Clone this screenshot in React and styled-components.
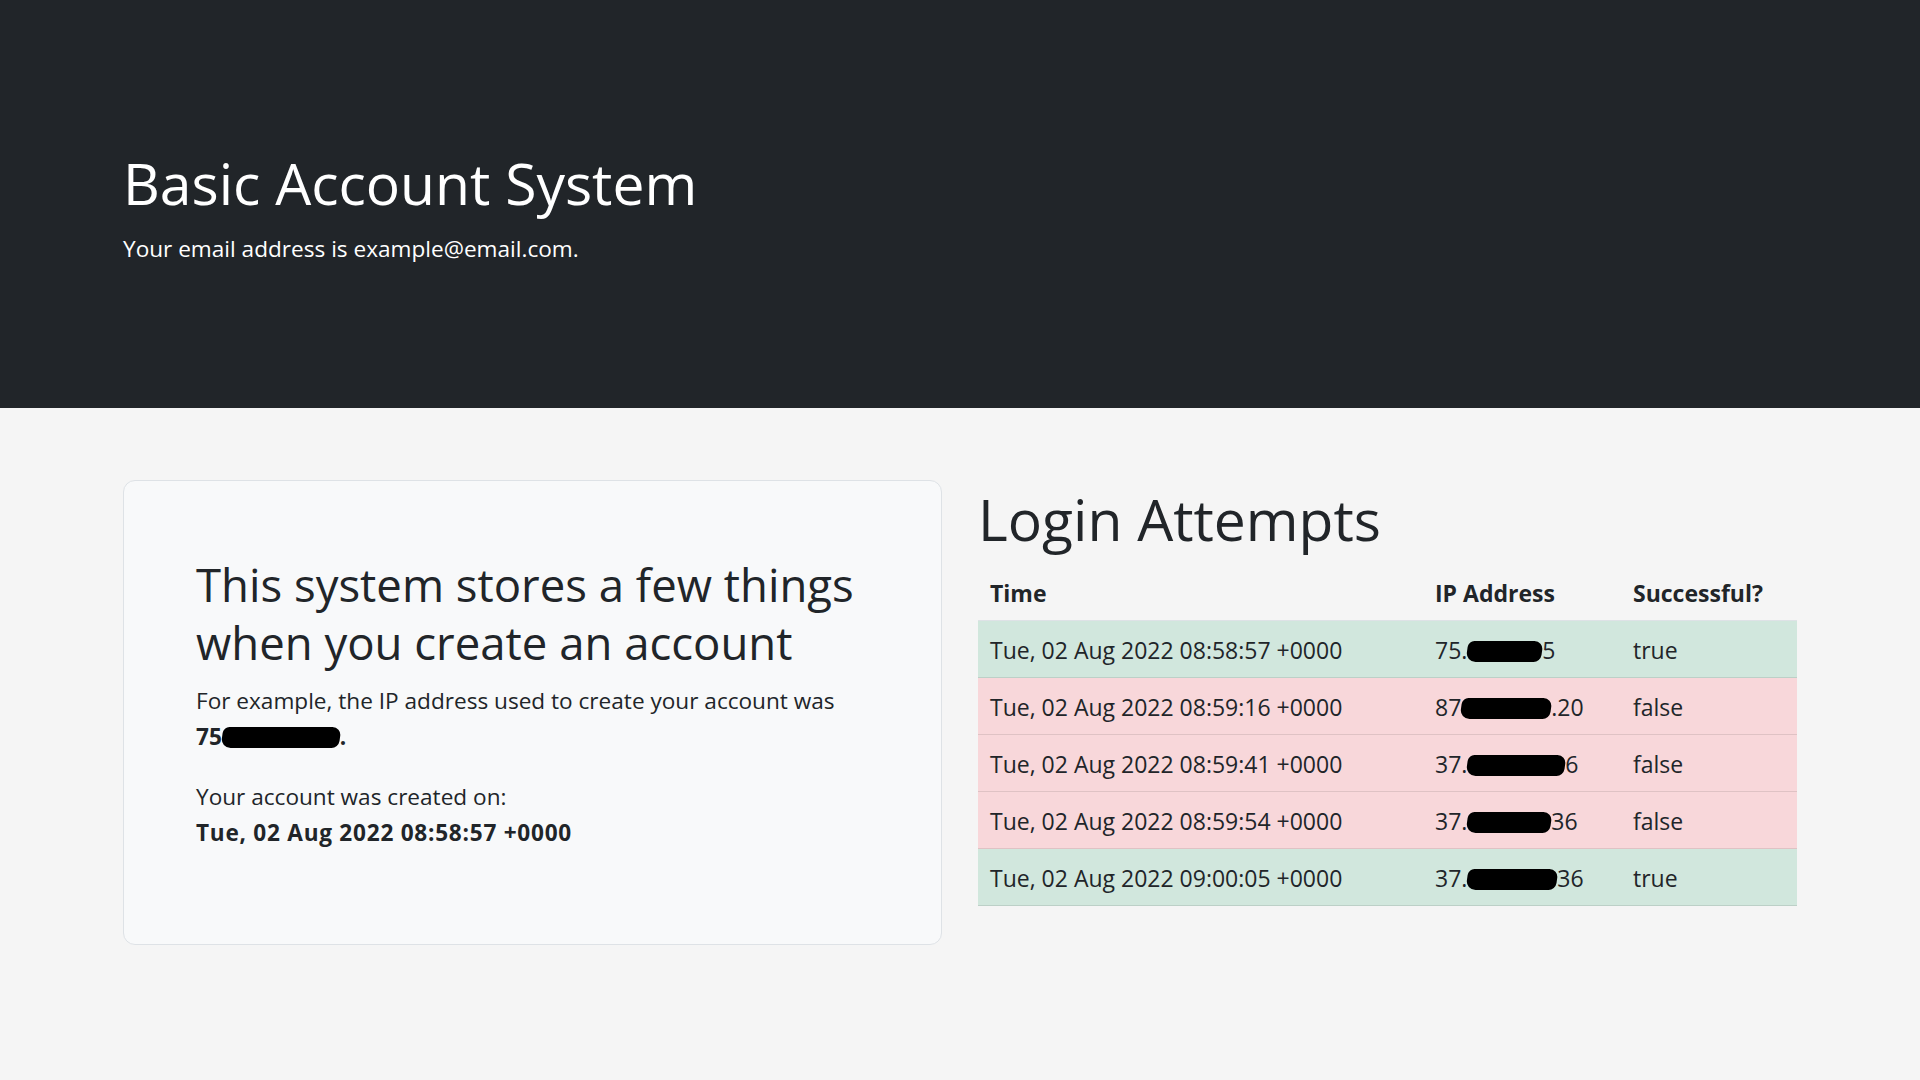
import React from "react"
import styled, { createGlobalStyle } from "styled-components"

const GlobalStyle = createGlobalStyle`
  * {
    box-sizing: border-box;
  }

  body {
    margin: 0;
    background: #f5f5f5;
    color: #212529;
    font-family: "Open Sans", "Noto Sans", "Liberation Sans", sans-serif;
    font-size: 22.6px;
    line-height: 36px;
  }
`

const Container = styled.div`
  max-width: 1710px;
  margin: 0 auto;
  padding: 0 18px;
`

const Hero = styled.header`
  background: #212529;
  color: #fff;
  padding: 147px 0 141px;
`

const HeroTitle = styled.h1`
  margin: 0 0 12px;
  font-size: 57px;
  line-height: 72px;
  font-weight: 400;
`

const HeroText = styled.p`
  margin: 0;
`

const Main = styled.main`
  padding-top: 72px;
`

const Row = styled.div`
  display: grid;
  grid-template-columns: 1fr 1fr;
  gap: 36px;
  align-items: start;
`

const Card = styled.section`
  background: #f8f9fa;
  border: 1px solid #dee2e6;
  border-radius: 12px;
  padding: 75px 72px 69px;
`

const CardTitle = styled.h2`
  margin: 0 0 12px;
  font-size: 45.5px;
  line-height: 57.6px;
  font-weight: 400;
`

const Paragraph = styled.p`
  margin: 0 0 24px;
`

const Strong = styled.b`
  font-weight: 700;
  white-space: nowrap;
  letter-spacing: ${(p) => (p.$wide ? "0.75px" : "0")};
`

const Redact = styled.span`
  display: inline-block;
  width: ${(p) => p.$w}px;
  height: 21px;
  background: #000;
  border-radius: 6px 9px 7px 10px;
  vertical-align: -3px;
  transform: skewX(-8deg);
`

const SectionTitle = styled.h1`
  margin: 3px 0 9px;
  font-size: 57px;
  line-height: 72px;
  font-weight: 400;
`

const Table = styled.table`
  width: 100%;
  border-collapse: collapse;
  table-layout: fixed;
  font-size: 23px;
`

const Th = styled.th`
  width: ${(p) => p.$w};
  text-align: left;
  font-weight: 700;
  padding: 11px 12px 9px;
  border-bottom: 1px solid #dee2e6;
`

const Tr = styled.tr`
  background: ${(p) => (p.$ok ? "#d1e7dd" : "#f8d7da")};
  border-bottom: 1px solid ${(p) => (p.$ok ? "#bcd0c7" : "#dfc2c4")};
`

const Td = styled.td`
  padding: 11px 12px 9px;
  white-space: nowrap;
`

const attempts = [
  { time: "Tue, 02 Aug 2022 08:58:57 +0000", pre: "75.", blob: 75, post: "5", ok: true },
  { time: "Tue, 02 Aug 2022 08:59:16 +0000", pre: "87", blob: 90, post: ".20", ok: false },
  { time: "Tue, 02 Aug 2022 08:59:41 +0000", pre: "37.", blob: 98, post: "6", ok: false },
  { time: "Tue, 02 Aug 2022 08:59:54 +0000", pre: "37.", blob: 84, post: "36", ok: false },
  { time: "Tue, 02 Aug 2022 09:00:05 +0000", pre: "37.", blob: 90, post: "36", ok: true },
]

const App = () => {
  return (
    <>
      <GlobalStyle />
      <Hero>
        <Container>
          <HeroTitle>Basic Account System</HeroTitle>
          <HeroText>Your email address is example@email.com.</HeroText>
        </Container>
      </Hero>
      <Main>
        <Container>
          <Row>
            <Card>
              <CardTitle>This system stores a few things when you create an account</CardTitle>
              <Paragraph>
                For example, the IP address used to create your account was{" "}
                <Strong>
                  75<Redact $w={118} />.
                </Strong>
              </Paragraph>
              <Paragraph>
                Your account was created on:
                <br />
                <Strong $wide>Tue, 02 Aug 2022 08:58:57 +0000</Strong>
              </Paragraph>
            </Card>
            <div>
              <SectionTitle>Login Attempts</SectionTitle>
              <Table>
                <thead>
                  <tr>
                    <Th $w="445px">Time</Th>
                    <Th $w="198px">IP Address</Th>
                    <Th>Successful?</Th>
                  </tr>
                </thead>
                <tbody>
                  {attempts.map((item, index) => (
                    <Tr key={index} $ok={item.ok}>
                      <Td>{item.time}</Td>
                      <Td>
                        {item.pre}
                        <Redact $w={item.blob} />
                        {item.post}
                      </Td>
                      <Td>{item.ok ? "true" : "false"}</Td>
                    </Tr>
                  ))}
                </tbody>
              </Table>
            </div>
          </Row>
        </Container>
      </Main>
    </>
  )
}

export default App
